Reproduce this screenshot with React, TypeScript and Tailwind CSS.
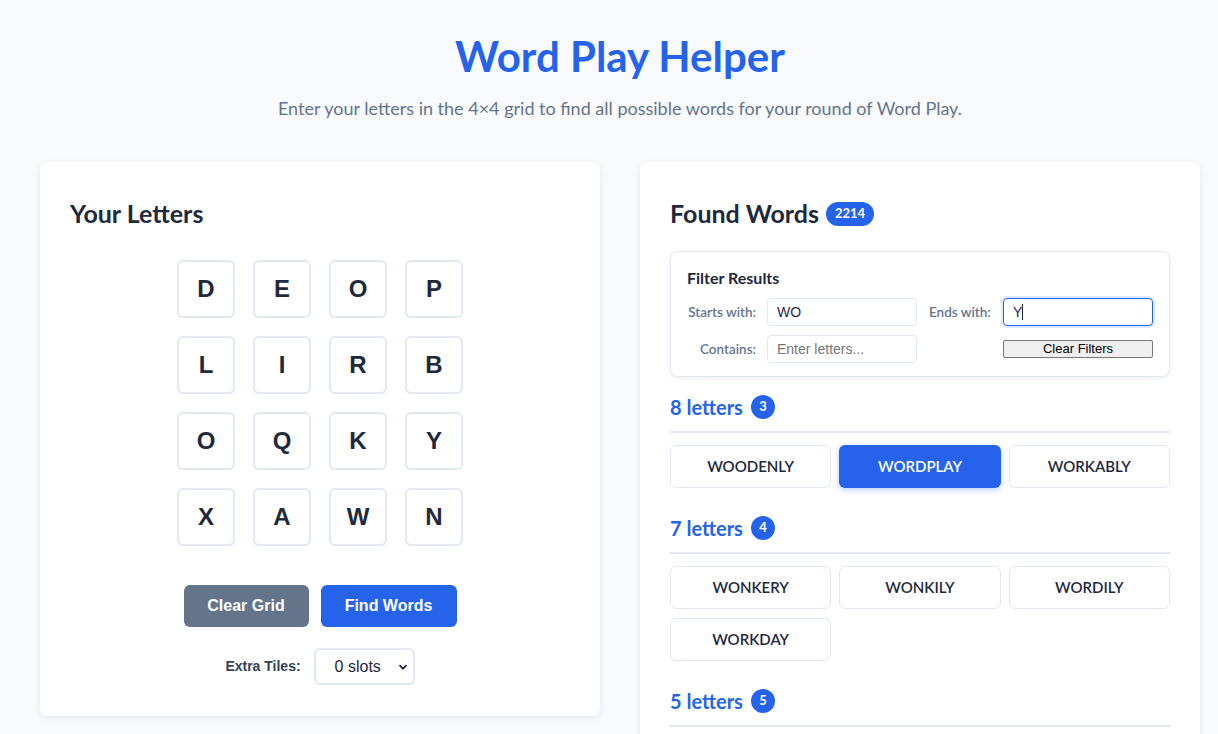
import React from "react";

const grid = [
  ["D", "E", "O", "P"],
  ["L", "I", "R", "B"],
  ["O", "Q", "K", "Y"],
  ["X", "A", "W", "N"],
];

interface WordGroup {
  length: number;
  count: number;
  words: string[];
}

const groups: WordGroup[] = [
  { length: 8, count: 3, words: ["WOODENLY", "WORDPLAY", "WORKABLY"] },
  { length: 7, count: 4, words: ["WONKERY", "WONKILY", "WORDILY", "WORKDAY"] },
  { length: 5, count: 5, words: [] },
];

const ui = { fontFamily: "Lato, 'Segoe UI', 'Open Sans', sans-serif" };
const arial = { fontFamily: "'Liberation Sans', Arial, sans-serif" };

const App: React.FC = () => {
  const selected = "WORDPLAY";

  return (
    <div className="min-h-screen bg-[#f8fafc] pl-[40px] pr-[18px] overflow-hidden" style={ui}>
      {/* Header */}
      <div className="text-center pt-[28px]">
        <h1 className="text-[42px] leading-[56px] font-bold text-[#2563eb]">Word Play Helper</h1>
        <p className="mt-[11px] text-[18px] leading-[26px] text-[#64748b]">
          Enter your letters in the 4×4 grid to find all possible words for your round of Word Play.
        </p>
      </div>

      <div className="mt-[41px] grid grid-cols-2 gap-[40px]">
        {/* Letters */}
        <div className="self-start bg-white rounded-lg shadow-[0_2px_8px_rgba(15,23,42,0.08)] px-[30px] pt-[35px] pb-[31px]">
          <h2 className="text-[25px] leading-[32px] font-bold text-[#1e293b]">Your Letters</h2>
          <div className="mt-[31px] flex justify-center">
            <div className="grid grid-cols-4 gap-[18px]">
              {grid.flat().map((l, i) => (
                <div
                  key={i}
                  className="w-[58px] h-[58px] flex items-center justify-center border-2 border-[#e2e8f0] rounded-md text-[24px] font-bold text-[#1e293b]"
                  style={arial}
                >
                  {l}
                </div>
              ))}
            </div>
          </div>
          <div className="mt-[39px] flex justify-center gap-3" style={arial}>
            <button className="w-[125px] h-[42px] rounded-md bg-[#64748b] text-white font-bold text-[16px]">
              Clear Grid
            </button>
            <button className="w-[136px] h-[42px] rounded-md bg-[#2563eb] text-white font-bold text-[16px]">
              Find Words
            </button>
          </div>
          <div className="mt-[21px] flex justify-center items-center gap-[13px]" style={arial}>
            <span className="text-[14px] font-bold text-[#334155]">Extra Tiles:</span>
            <div className="w-[101px] h-[37px] border-2 border-[#e2e8f0] rounded-md flex items-center pl-[19px] pr-[5px] text-[16px] text-[#1e293b]">
              <span className="flex-1">0 slots</span>
              <svg width="10" height="10" viewBox="0 0 10 10" className="text-[#1e293b]">
                <path d="M1.5 3.2 L5 6.7 L8.5 3.2" fill="none" stroke="currentColor" strokeWidth="1.8" />
              </svg>
            </div>
          </div>
        </div>

        {/* Found words */}
        <div className="bg-white rounded-lg shadow-[0_2px_8px_rgba(15,23,42,0.08)] px-[30px] pt-[35px] pb-[30px]">
          <div className="flex items-center gap-[7px]">
            <h2 className="text-[25px] leading-[32px] font-bold text-[#1e293b]">Found Words</h2>
            <span className="h-[24px] px-[9px] rounded-full bg-[#2563eb] text-white text-[13px] font-bold flex items-center mt-[2px]">
              2214
            </span>
          </div>

          <div className="mt-[22px] border border-[#e2e8f0] rounded-lg shadow-[0_1px_4px_rgba(15,23,42,0.08)] px-[16px] pt-[15px] pb-[13px]">
            <h3 className="text-[16px] leading-[22px] font-bold text-[#1e293b]">Filter Results</h3>
            <div className="mt-[9px] grid grid-cols-[80px_150px_86px_150px] gap-y-[9px] items-center whitespace-nowrap">
              <span className="text-[13.5px] font-semibold text-[#64748b] text-right pr-[11px]">Starts with:</span>
              <div className="h-[28px] border border-[#e2e8f0] rounded flex items-center pl-[9px] text-[14px] text-[#1e293b]" style={arial}>
                WO
              </div>
              <span className="text-[13.5px] font-semibold text-[#64748b] pl-[12px]">Ends with:</span>
              <div className="h-[28px] border border-[#2563eb] ring-2 ring-[#dbeafe] rounded flex items-center pl-[9px] text-[14px] text-[#1e293b]" style={arial}>
                Y<span className="w-px h-[16px] bg-[#1e293b]" />
              </div>
              <span className="text-[13.5px] font-semibold text-[#64748b] text-right pr-[11px]">Contains:</span>
              <div className="h-[28px] border border-[#e2e8f0] rounded flex items-center pl-[9px] text-[14px] text-[#757575]" style={arial}>
                Enter letters...
              </div>
              <span />
              <button
                className="h-[18px] border border-[#767676] rounded-[2px] bg-[#efefef] text-[13px] leading-[16px] text-black"
                style={arial}
              >
                Clear Filters
              </button>
            </div>
          </div>

          <div className="mt-[18px]">
            {groups.map((g) => (
              <div key={g.length} className="mb-[28px]">
                <div className="flex items-center gap-[8px] pb-[12px] border-b-2 border-[#e2e8f0]">
                  <span className="text-[20px] leading-[24px] font-bold text-[#2563eb]">{g.length} letters</span>
                  <span className="w-[24px] h-[24px] rounded-full bg-[#2563eb] text-white text-[13px] font-bold flex items-center justify-center">
                    {g.count}
                  </span>
                </div>
                {g.words.length > 0 && (
                  <div className="mt-[12px] grid grid-cols-3 gap-x-[8px] gap-y-[9px]">
                    {g.words.map((w) => (
                      <div
                        key={w}
                        className={
                          w === selected
                            ? "h-[43px] rounded-md bg-[#2563eb] text-white shadow-[0_2px_6px_rgba(37,99,235,0.3)] flex items-center justify-center text-[15px] font-semibold"
                            : "h-[43px] rounded-md border border-[#e2e8f0] bg-white text-[#1e293b] flex items-center justify-center text-[15px] font-semibold"
                        }
                      >
                        {w}
                      </div>
                    ))}
                  </div>
                )}
              </div>
            ))}
          </div>
        </div>
      </div>
    </div>
  );
};

export default App;
